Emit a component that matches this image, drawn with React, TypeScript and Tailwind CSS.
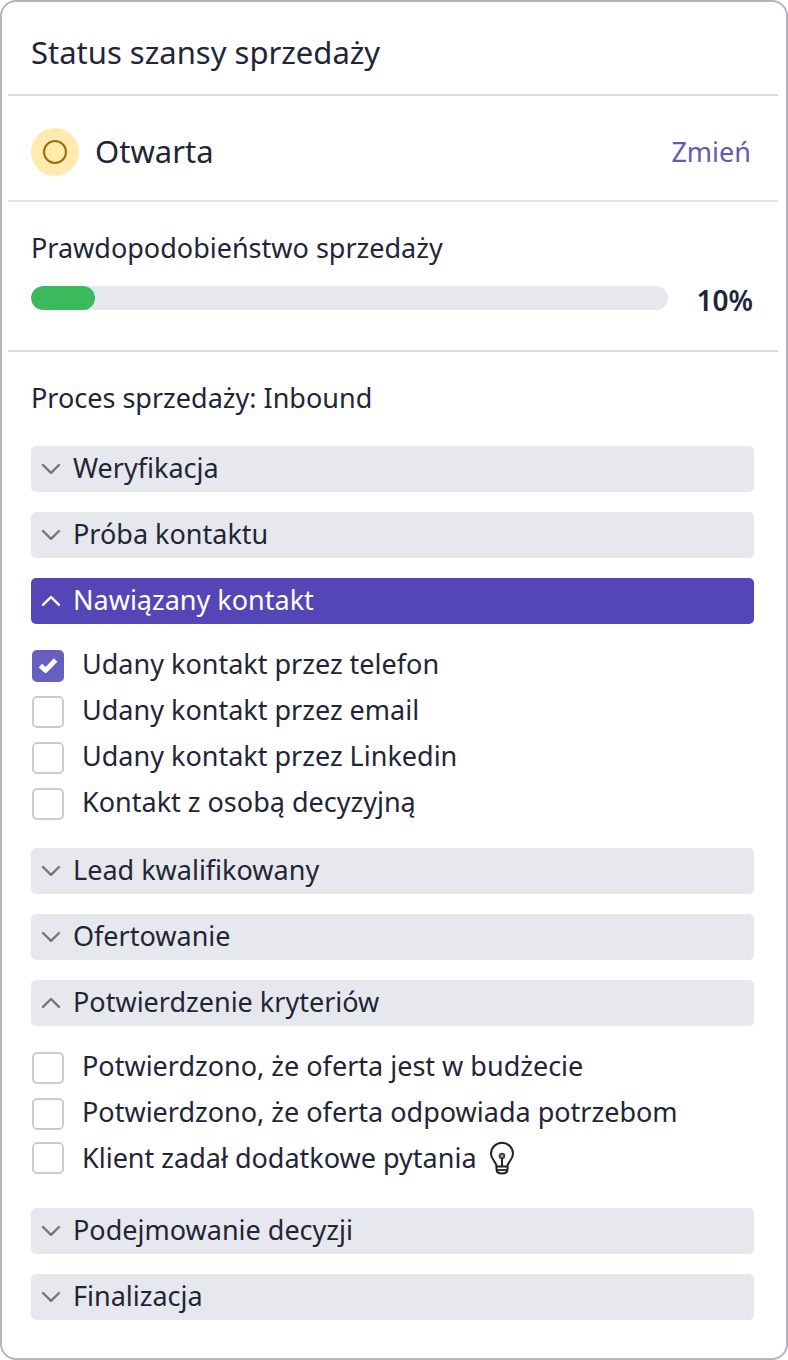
import { useState } from "react";

type Item = { label: string; done?: boolean; hint?: boolean };
type Stage = { name: string; open?: boolean; active?: boolean; items?: Item[] };

const STAGES: Stage[] = [
  { name: "Weryfikacja" },
  { name: "Próba kontaktu" },
  {
    name: "Nawiązany kontakt",
    open: true,
    active: true,
    items: [
      { label: "Udany kontakt przez telefon", done: true },
      { label: "Udany kontakt przez email" },
      { label: "Udany kontakt przez Linkedin" },
      { label: "Kontakt z osobą decyzyjną" },
    ],
  },
  { name: "Lead kwalifikowany" },
  { name: "Ofertowanie" },
  {
    name: "Potwierdzenie kryteriów",
    open: true,
    items: [
      { label: "Potwierdzono, że oferta jest w budżecie" },
      { label: "Potwierdzono, że oferta odpowiada potrzebom" },
      { label: "Klient zadał dodatkowe pytania", hint: true },
    ],
  },
  { name: "Podejmowanie decyzji" },
  { name: "Finalizacja" },
];

function Chevron({ up, light }: { up: boolean; light: boolean }) {
  return (
    <svg
      viewBox="0 0 20 12"
      className={light ? "h-3 w-5 shrink-0 text-white" : "h-3 w-5 shrink-0 text-[#75767b]"}
      fill="none"
      stroke="currentColor"
      strokeWidth="2.4"
      strokeLinecap="round"
      strokeLinejoin="round"
      aria-hidden="true"
    >
      <path d={up ? "M2 9.8 L10 2 L18 9.8" : "M2 2 L10 9.8 L18 2"} />
    </svg>
  );
}

function Bulb() {
  return (
    <svg
      viewBox="0 0 26 34"
      className="h-[34px] w-[26px] shrink-0"
      fill="none"
      stroke="#222222"
      strokeWidth="2"
      strokeLinejoin="round"
      aria-hidden="true"
    >
      <path d="M7.5 25.5 C7.5 20.5 2 19 2 12.8 A11 11 0 0 1 24 12.8 C24 19 18.5 20.5 18.5 25.5 Z" />
      <path d="M7.5 25.5 V28.5 C7.5 31 9.5 32.5 13 32.5 S18.5 31 18.5 28.5 V25.5" />
      <path d="M7.5 29 H18.5" strokeWidth="1.8" />
      <circle cx="13" cy="15" r="2.3" stroke="#444444" fill="#aaaaaa" />
      <path d="M13 17.5 V25.5" />
    </svg>
  );
}

function CheckRow({ item }: { item: Item }) {
  const [done, setDone] = useState(!!item.done);
  return (
    <li>
      <label
        className={
          item.hint
            ? "flex h-[42px] items-center pb-0.5 pl-px"
            : "flex min-h-[46px] items-center pb-0.5 pl-px"
        }
      >
        <span className="grid shrink-0">
          <input
            type="checkbox"
            checked={done}
            onChange={() => setDone(!done)}
            className="col-start-1 row-start-1 size-8 appearance-none rounded-[5px] border-2 border-[#cccccc] bg-white checked:border-[#6560bf] checked:bg-[#6560bf]"
          />
          {done && (
            <svg
              viewBox="0 0 32 32"
              className="pointer-events-none col-start-1 row-start-1 size-8"
              fill="none"
              stroke="white"
              strokeWidth="4.8"
              strokeLinejoin="round"
              aria-hidden="true"
            >
              <path d="M8.4 15.6 L13.7 20.4 L23.6 10" />
            </svg>
          )}
        </span>
        <span className={item.hint ? "ml-[18px]" : "ml-[18px] pb-1"}>{item.label}</span>
        {item.hint && (
          <span className="ml-3">
            <Bulb />
          </span>
        )}
      </label>
    </li>
  );
}

function StageBlock({ stage }: { stage: Stage }) {
  const [open, setOpen] = useState(!!stage.open);
  const active = !!stage.active;
  const hinted = !!stage.items?.some((item) => item.hint);
  return (
    <section className="flex flex-col gap-5">
      <button
        type="button"
        aria-expanded={open}
        onClick={() => setOpen(!open)}
        className={
          active
            ? "flex h-[46px] items-center gap-3 rounded-[5px] bg-[#5546b7] px-2.5 text-left text-white"
            : "flex h-[46px] items-center gap-3 rounded-[5px] bg-[#e7e8ed] px-2.5 text-left"
        }
      >
        <Chevron up={open} light={active} />
        <span className="pb-0.5">{stage.name}</span>
      </button>
      {open && stage.items && (
        <ul className={hinted ? "pb-2" : "pb-0"}>
          {stage.items.map((item) => (
            <CheckRow key={item.label} item={item} />
          ))}
        </ul>
      )}
    </section>
  );
}

export default function App() {
  const probability = 10;
  return (
    <main className="rounded-2xl border-2 border-[#b5b3c0] bg-white pr-2 pb-[38px] pl-1.5 font-['Noto_Sans',sans-serif] text-[27px] leading-[36px] text-[#222537]">
      <header className="border-b-2 border-[#d9dadd] px-[23px] pt-[30px] pb-[22px]">
        <h1 className="text-[31px] leading-[40px]">Status szansy sprzedaży</h1>
      </header>

      <section className="flex items-center border-b-2 border-[#e2e3e6] px-[23px] pt-8 pb-6">
        <span className="flex size-12 items-center justify-center rounded-full bg-[#ffebae]">
          <span className="size-6 rounded-full border-2 border-[#9c690f]" />
        </span>
        <span className="ml-4 pb-0.5 text-[31px] leading-[40px]">Otwarta</span>
        <button type="button" className="ml-auto pr-1 text-[#6459ba]">
          Zmień
        </button>
      </section>

      <section className="border-b-2 border-[#d9dadd] px-[23px] pt-7 pb-8">
        <h2>Prawdopodobieństwo sprzedaży</h2>
        <div className="mt-4 flex items-center">
          <div
            role="progressbar"
            aria-label="Prawdopodobieństwo sprzedaży"
            aria-valuenow={probability}
            className="mb-1 h-6 flex-1 overflow-hidden rounded-full bg-[#e7e8ed]"
          >
            <div className="h-full rounded-full bg-[#3bb95c]" style={{ width: `${probability}%` }} />
          </div>
          <span className="ml-7 pr-0.5 text-[28px] font-semibold">{probability}%</span>
        </div>
      </section>

      <section className="pt-7 pr-6 pl-[23px]">
        <h2>Proces sprzedaży: Inbound</h2>
        <div className="mt-[30px] flex flex-col gap-5">
          {STAGES.map((stage) => (
            <StageBlock key={stage.name} stage={stage} />
          ))}
        </div>
      </section>
    </main>
  );
}
